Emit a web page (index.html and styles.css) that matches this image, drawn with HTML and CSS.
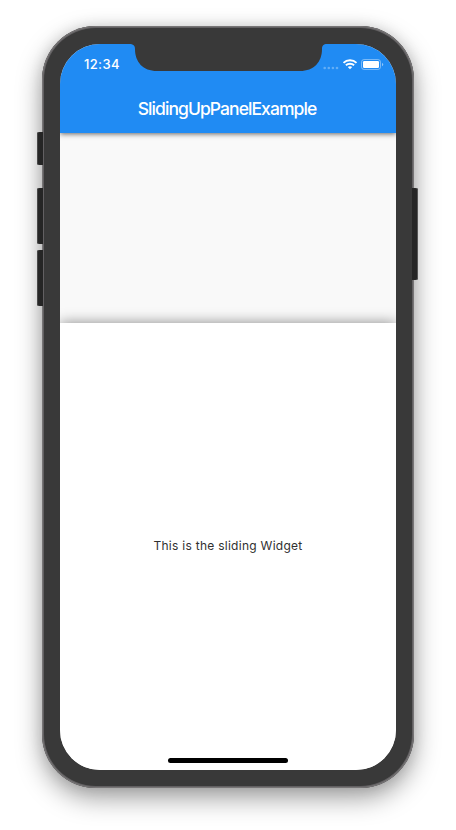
FILE: index.html
```html
<!DOCTYPE html>
<html lang="en">
<head>
<meta charset="utf-8">
<title>SlidingUpPanelExample</title>
<link rel="stylesheet" href="styles.css">
</head>
<body>
<div class="phone">
  <i class="key mute"></i><i class="key up"></i><i class="key down"></i><i class="key power"></i>
  <main class="screen">
    <svg class="notch" width="198" height="27" viewBox="0 0 198 27"><path d="M0 0H198C194.500 0 193 1.500 193 5C193 18 185 27 171 27H28C14 27 6 18 6 5C6 1.500 4.500 0 0 0Z" fill="#393939"/></svg>
    <header class="appbar">
      <div class="status">
        <span class="time">12:34</span>
        <svg class="indicators" width="62" height="14" viewBox="0 0 62 14">
          <g fill="#fff" fill-opacity=".3"><circle cx="2.7" cy="10" r="1.3"/><circle cx="6.8" cy="10" r="1.3"/><circle cx="10.9" cy="10" r="1.3"/><circle cx="15" cy="10" r="1.3"/></g>
          <g fill="none" stroke="#fff" stroke-width="1.9"><path d="M21.500 4.900C25 1.300 31 1.300 34.500 4.900"/><path d="M23.900 7.300C26.100 5.200 29.900 5.200 32.100 7.300"/></g>
          <path d="M25.800 9.100Q28 7.300 30.200 9.100L28 11.300Z" fill="#fff"/>
          <rect x="39.500" y="1.500" width="19" height="10" rx="2.6" fill="none" stroke="#fff" stroke-opacity=".4"/>
          <rect x="41" y="3" width="16" height="7" rx="1.3" fill="#fff"/>
          <path d="M60 5Q61.200 5.300 61.200 6.600T60 8.200Z" fill="#fff" fill-opacity=".5"/>
        </svg>
      </div>
      <h1 class="title">SlidingUpPanelExample</h1>
    </header>
    <section class="content"></section>
    <section class="panel">This is the sliding Widget</section>
    <i class="home"></i>
  </main>
</div>
</body>
</html>
```
FILE: styles.css
```css
* { box-sizing: border-box; }
body {
  margin: 0;
  height: 830px;
  padding: 26px 42px 0;
  overflow: hidden;
  background: #fff;
  font-family: Inter, "Liberation Sans", sans-serif;
}
.phone {
  position: relative;
  width: 372px;
  height: 762px;
  padding: 18px;
  border-radius: 54px;
  background: #393939;
  box-shadow: inset 0 0 0 1px #777576, inset 0 0 0 2px #626062, 0 10px 26px rgba(0, 0, 0, .38), 0 0 14px rgba(0, 0, 0, .1);
}
.key {
  position: absolute;
  left: -5px;
  width: 6px;
  border-radius: 2px 0 0 2px;
  background: #252525;
  box-shadow: inset 1px 0 #494949;
}
.mute { top: 106px; height: 33px; }
.up { top: 162px; height: 56px; }
.down { top: 224px; height: 56px; }
.power {
  top: 162px;
  left: auto;
  right: -4px;
  height: 92px;
  border-radius: 0 2px 2px 0;
  box-shadow: inset -1px 0 #555;
}
.screen {
  position: relative;
  display: flex;
  flex-direction: column;
  height: 726px;
  overflow: hidden;
  border-radius: 40px;
  background: #f9f9f9;
}
.notch {
  position: absolute;
  z-index: 3;
  top: 0;
  left: 69px;
}
.appbar {
  position: relative;
  z-index: 2;
  flex: 0 0 89px;
  background: #208bf3;
  color: #fff;
  box-shadow: 0 1px 5px rgba(0, 0, 0, .6);
}
.status {
  display: flex;
  justify-content: space-between;
  align-items: center;
  height: 41px;
  padding: 0 12px 0 24px;
}
.time {
  padding-bottom: 1px;
  font-size: 13px;
  font-weight: 550;
  letter-spacing: .35px;
}
.title {
  margin: 10px 0 0;
  padding-right: 2px;
  font-size: 17.5px;
  line-height: 27px;
  font-weight: 450;
  letter-spacing: -.93px;
  text-align: center;
}
.content { flex: 0 0 190px; }
.panel {
  display: flex;
  flex: 1;
  align-items: center;
  justify-content: center;
  padding-bottom: 2px;
  background: #fff;
  box-shadow: 0 0 13px rgba(0, 0, 0, .45);
  color: #303030;
  font-size: 12px;
  letter-spacing: .27px;
}
.home {
  position: absolute;
  left: 108px;
  bottom: 7px;
  width: 120px;
  height: 5px;
  border-radius: 3px;
  background: #000;
}
```
